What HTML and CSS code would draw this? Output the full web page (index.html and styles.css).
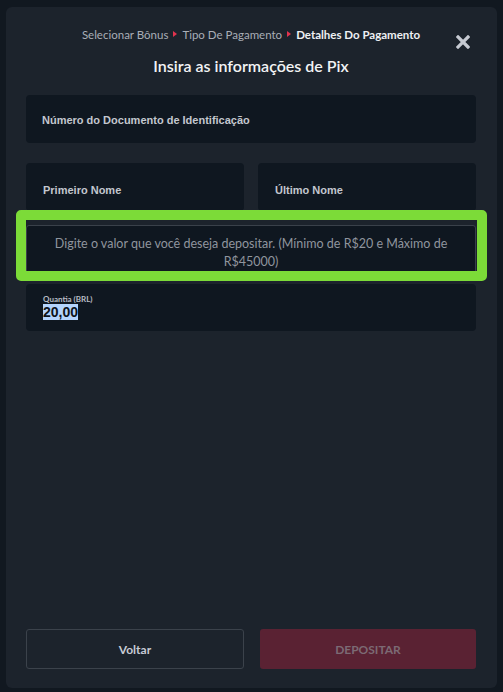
FILE: index.html
```html
<!DOCTYPE html>
<html lang="pt-BR">
<head>
<meta charset="utf-8">
<title>Detalhes Do Pagamento</title>
<link rel="stylesheet" href="styles.css">
</head>
<body>
<div class="modal">
  <!-- Steps of the deposit flow -->
  <div class="header">
    <div class="steps">
      <span class="step">Selecionar Bônus</span>
      <span class="arrow"></span>
      <span class="step">Tipo De Pagamento</span>
      <span class="arrow"></span>
      <span class="step current">Detalhes Do Pagamento</span>
    </div>
    <button class="close" aria-label="Fechar">
      <svg width="14" height="14" viewBox="0 0 14 14">
        <path d="M2 2 L12 12 M12 2 L2 12" stroke="#c6cad2" stroke-width="3.2" stroke-linecap="square"/>
      </svg>
    </button>
    <h1 class="title">Insira as informações de Pix</h1>
  </div>

  <div class="form">
    <div class="field">
      <span class="label">Número do Documento de Identificação</span>
    </div>
    <div class="row">
      <div class="field"><span class="label">Primeiro Nome</span></div>
      <div class="field"><span class="label">Último Nome</span></div>
    </div>
    <div class="hint">
      Digite o valor que você deseja depositar. (Mínimo de R$20 e Máximo de R$45000)
    </div>
    <div class="field amount">
      <span class="small-label">Quantia (BRL)</span>
      <span class="value"><span class="selected">20,00</span></span>
    </div>
    <!-- highlight box drawn over the hint -->
    <div class="highlight"></div>
  </div>

  <div class="footer">
    <button class="btn back">Voltar</button>
    <button class="btn submit" disabled>DEPOSITAR</button>
  </div>
</div>
</body>
</html>
```

FILE: styles.css
```css
/* Page behind the modal */
body {
  margin: 0;
  padding: 7px 6px 4px 6px;
  background: #111820;
  font-family: 'Lato', 'Open Sans', sans-serif;
}
/* The modal window */
.modal {
  height: 681px;
  box-sizing: border-box;
  background: #1c232c;
  border-radius: 6px;
  padding: 0 21px 19px 20px;
  display: flex;
  flex-direction: column;
}
.header {
  position: relative;
  padding-top: 20px;
  text-align: center;
}
.steps {
  display: flex;
  justify-content: center;
  align-items: center;
  gap: 5px;
  font-size: 11.5px;
  color: #a9aeb7;
  height: 14px;
}
.step.current {
  color: #eef0f3;
  font-weight: 700;
}
/* small red triangle between steps */
.arrow {
  width: 0;
  height: 0;
  border-top: 3px solid transparent;
  border-bottom: 3px solid transparent;
  border-left: 4px solid #e2334e;
}
.close {
  position: absolute;
  right: 6px;
  top: 28px;
  background: none;
  border: 0;
  padding: 0;
  cursor: pointer;
}
.title {
  margin: 15px 0 0 0;
  font-size: 16px;
  font-weight: 600;
  color: #f2f3f5;
  line-height: 20px;
}
.form {
  position: relative;
  margin-top: 19px;
  display: flex;
  flex-direction: column;
}
/* Input boxes */
.field {
  background: #0f1720;
  border-radius: 4px;
  height: 48px;
  display: flex;
  align-items: center;
  padding: 2px 16px 0 16px;
  box-sizing: border-box;
}
.label {
  font-family: 'Liberation Sans', Arial, sans-serif;
  font-weight: 700;
  font-size: 11px;
  color: #c3c7cf;
}
.row {
  display: flex;
  gap: 14px;
  margin-top: 20px;
}
.row .field {
  flex: 1;
  padding-left: 17px;
  padding-top: 5px;
}
.hint {
  margin-top: 14px;
  border: 1px solid #3a414a;
  border-radius: 3px;
  background: #0f1720;
  padding: 9px 24px 8px 24px;
  text-align: center;
  font-size: 12.5px;
  line-height: 18px;
  color: #8f959e;
}
.field.amount {
  margin-top: 4px;
  flex-direction: column;
  align-items: flex-start;
  justify-content: center;
  height: 47px;
  padding: 0 17px;
}
.small-label {
  font-size: 8px;
  font-weight: 700;
  color: #b9bdc5;
  line-height: 10px;
}
.value {
  font-family: 'Liberation Sans', Arial, sans-serif;
  font-weight: 700;
  font-size: 14px;
  line-height: 17px;
  color: #ffffff;
}
.selected {
  background: #b4d4fd;
  color: #0d131a;
}
/* Green annotation frame over the hint */
.highlight {
  position: absolute;
  left: -10px;
  top: 115px;
  width: 451px;
  height: 51px;
  border: 10px solid #7cdb38;
  border-radius: 5px;
  pointer-events: none;
}
.footer {
  margin-top: auto;
  display: flex;
  gap: 16px;
}
.btn {
  flex: 1;
  height: 40px;
  border-radius: 3px;
  font-family: 'Lato', 'Open Sans', sans-serif;
  font-size: 12px;
  font-weight: 700;
}
.btn.back {
  background: #1c232c;
  border: 1px solid #3b424b;
  color: #c7cbd5;
  flex-basis: 218px;
  flex-grow: 0;
}
.btn.submit {
  background: #5a2233;
  border: 0;
  color: #7c6a74;
}
```
